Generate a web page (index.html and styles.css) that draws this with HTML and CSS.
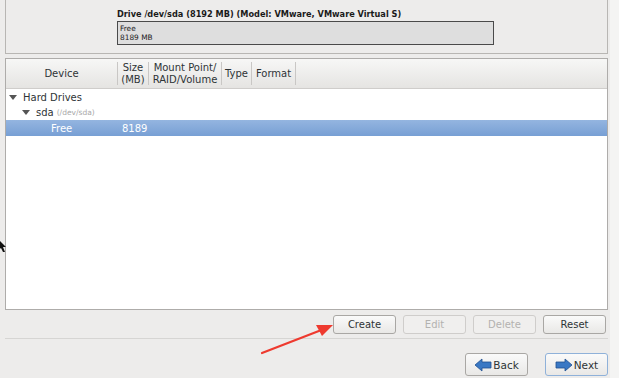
FILE: index.html
```html
<!DOCTYPE html>
<html lang="en">
<head>
    <meta charset="UTF-8">
    <title>Partitioning</title>
    <link rel="stylesheet" href="styles.css">
</head>
<body>
    <div class="screen">
        <div class="main">
            <div class="drive-panel">
                <div class="drive-title">Drive /dev/sda (8192 MB) (Model: VMware, VMware Virtual S)</div>
                <div class="drive-bar">
                    <div>Free</div>
                    <div>8189 MB</div>
                </div>
            </div>

            <div class="tree">
                <div class="tree-head">
                    <div class="col col-device">Device</div>
                    <div class="col col-size">Size<br>(MB)</div>
                    <div class="col col-mount">Mount Point/<br>RAID/Volume</div>
                    <div class="col col-type">Type</div>
                    <div class="col col-format">Format</div>
                </div>
                <div class="row row-top">
                    <span class="expander"></span>
                    <span>Hard Drives</span>
                </div>
                <div class="row row-sda">
                    <span class="expander"></span>
                    <span>sda</span>
                    <span class="dim">(/dev/sda)</span>
                </div>
                <div class="row row-selected">
                    <span class="cell-free">Free</span>
                    <span>8189</span>
                </div>
            </div>

            <div class="actions">
                <button class="btn">Create</button>
                <button class="btn" disabled>Edit</button>
                <button class="btn" disabled>Delete</button>
                <button class="btn">Reset</button>
            </div>

            <div class="separator"></div>

            <div class="nav">
                <button class="btn btn-nav">
                    <svg width="18" height="14" viewBox="0 0 18 14"><path d="M1 7 L8 1 L8 4 L17 4 L17 10 L8 10 L8 13 Z" fill="#3a78c4" stroke="#1f4f8f" stroke-width="0.8"/></svg>
                    Back
                </button>
                <button class="btn btn-nav btn-focus">
                    <svg width="18" height="14" viewBox="0 0 18 14"><path d="M17 7 L10 1 L10 4 L1 4 L1 10 L10 10 L10 13 Z" fill="#3a78c4" stroke="#1f4f8f" stroke-width="0.8"/></svg>
                    Next
                </button>
            </div>
        </div>
        <div class="edge"></div>
    </div>

    <!-- annotation arrow and mouse pointer lie over the window -->
    <svg class="arrow" width="90" height="40" viewBox="0 0 90 40">
        <path d="M2 38 L64 14" stroke="#ee3a2f" stroke-width="2.2" stroke-linecap="round"/>
        <path d="M73 10 L56 10 L62 21 Z" fill="#ee3a2f"/>
    </svg>
    <svg class="pointer" width="8" height="14" viewBox="0 0 8 14">
        <path d="M-2 0 L6 8 L3 8 L5 13 L3 13 L1 9 L-2 11 Z" fill="#111"/>
    </svg>
</body>
</html>
```

FILE: styles.css
```css
body {
    margin: 0;
    width: 619px;
    height: 378px;
    overflow: hidden;
    background-color: #edeceb;
    font-family: "DejaVu Sans", sans-serif;
    font-size: 10px;
    color: #2e3436;
    position: relative;
}
.screen {
    display: flex;
    height: 378px;
}
.main {
    flex: 1;
    display: flex;
    flex-direction: column;
    padding-left: 5px;
}
.edge {
    width: 9px;
    margin-left: 2px;
    background-color: #f4f4f3;
}
.drive-panel {
    height: 55px;
    margin-top: -1px;
    border: 1px solid #b8b6b3;
    padding: 9px 0 0 111px;
    box-sizing: border-box;
}
.drive-title {
    font-size: 8.2px;
    font-weight: bold;
    color: #1a1a1a;
    line-height: 10px;
}
.drive-bar {
    margin-top: 2px;
    width: 377px;
    height: 24px;
    border: 1px solid #4a4a4a;
    background-color: #dedede;
    font-size: 7.4px;
    line-height: 9px;
    padding: 2px 0 0 2px;
    box-sizing: border-box;
    color: #222;
}
.tree {
    margin-top: 4px;
    height: 252px;
    border: 1px solid #aeacaa;
    background-color: #fff;
    box-sizing: border-box;
}
.tree-head {
    display: flex;
    height: 29px;
    background: linear-gradient(#f7f7f6, #e5e4e2);
    border-bottom: 1px solid #cfcdcb;
    line-height: 12px;
}
.col {
    display: flex;
    align-items: center;
    justify-content: center;
    text-align: center;
    border-right: 1px solid #c9c7c5;
    margin: 3px 0;
}
.col-device { width: 111px; }
.col-size { width: 30px; }
.col-mount { width: 72px; }
.col-type { width: 29px; }
.col-format { width: 43px; }
.row {
    display: flex;
    align-items: center;
    height: 15px;
    padding-left: 3px;
    gap: 6px;
}
.row-top {
    height: 16px;
    padding-top: 1px;
    box-sizing: border-box;
}
.row-sda {
    padding-left: 16px;
}
.expander {
    width: 0;
    height: 0;
    border-left: 4px solid transparent;
    border-right: 4px solid transparent;
    border-top: 5px solid #555;
}
.dim {
    font-size: 7.5px;
    color: #a8a8a8;
    margin-left: -3px;
}
.row-selected {
    height: 16px;
    background: linear-gradient(#94b5e0, #779fd4);
    color: #fff;
    padding-left: 0;
    gap: 0;
}
.cell-free {
    width: 116px;
    padding-left: 45px;
    box-sizing: border-box;
}
.actions {
    display: flex;
    justify-content: flex-end;
    gap: 7px;
    padding-right: 2px;
    margin-top: 5px;
}
.btn {
    font-family: "DejaVu Sans", sans-serif;
    font-size: 10px;
    color: #2e3436;
    width: 63px;
    height: 19px;
    padding: 0;
    border: 1px solid #a9a7a4;
    border-radius: 3px;
    background: linear-gradient(#fafafa, #e9e8e6);
}
.btn:disabled {
    color: #b3b2b0;
    border-color: #cfcdcb;
    background: #f0efee;
}
.separator {
    margin-top: 4px;
    height: 1px;
    background-color: #d6d5d3;
}
.nav {
    display: flex;
    justify-content: flex-end;
    gap: 17px;
    margin-top: 14px;
}
.btn-nav {
    width: 63px;
    height: 23px;
    display: flex;
    align-items: center;
    justify-content: center;
    gap: 1px;
    font-size: 10.5px;
}
.btn-focus {
    border-color: #8fb1d9;
}
.arrow {
    position: absolute;
    left: 260px;
    top: 315px;
}
.pointer {
    position: absolute;
    left: 0;
    top: 239px;
}
```
